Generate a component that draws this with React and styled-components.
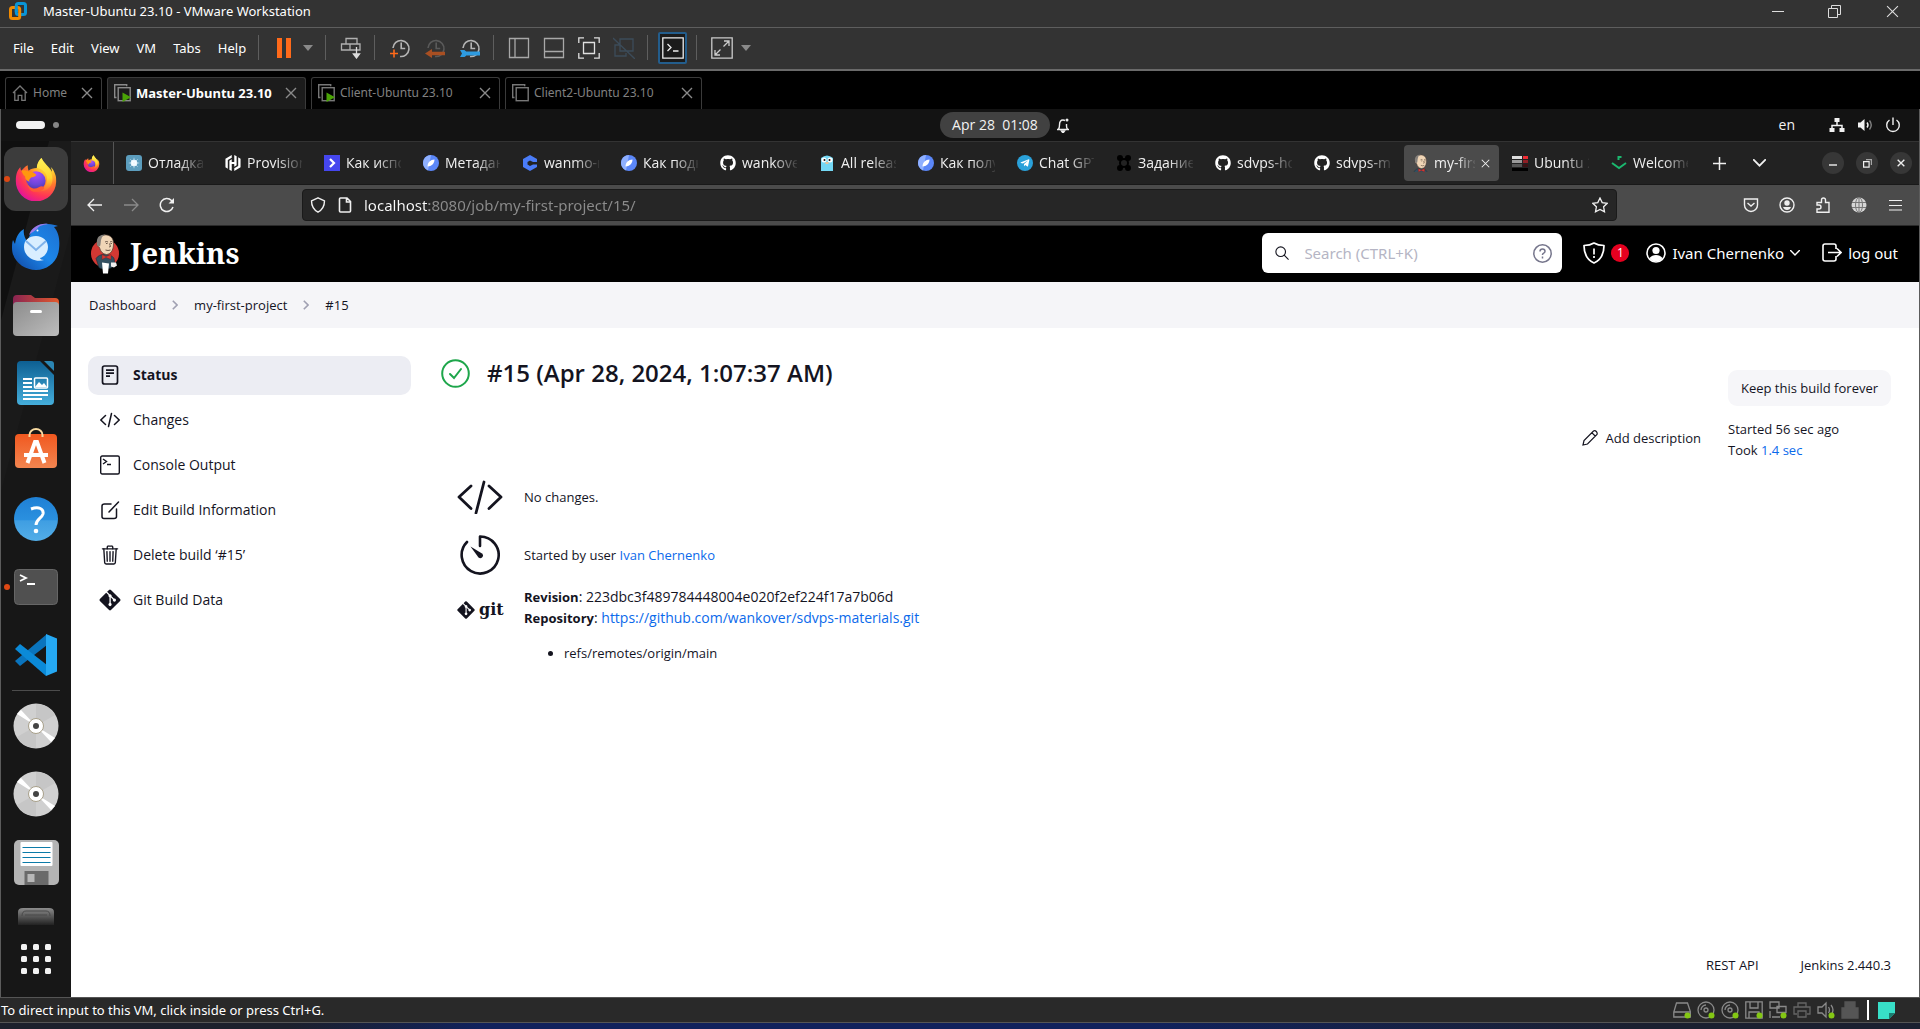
import React from "react";
import styled, { createGlobalStyle, css } from "styled-components";
import { FaGithub, FaTelegramPlane, FaGitAlt } from "react-icons/fa";
import { SiHashicorp } from "react-icons/si";
import { IoTrashOutline } from "react-icons/io5";

const sans = `"Open Sans", "Noto Sans", sans-serif`;
const chrome = `"Noto Sans", "Open Sans", sans-serif`;

const GlobalStyle = createGlobalStyle`
  *, *::before, *::after { box-sizing: border-box; }
  html, body, #root { height: 100%; }
  body { margin: 0; background: #000; font-family: ${sans}; font-size: 14px; }
  button { border: 0; padding: 0; background: none; color: inherit; font: inherit; cursor: pointer; }
  input { font: inherit; }
  svg { display: block; flex: none; }
  a { text-decoration: none; }
`;

/* ---------- icons ---------- */

const Svg = ({ w = 16, h, box = "0 0 16 16", sw = 1, color = "currentColor", children }) => (
  <svg width={w} height={h || w} viewBox={box} fill="none" stroke={color} strokeWidth={sw} aria-hidden="true">
    {children}
  </svg>
);

const Caret = () => <Svg w={10} h={6} box="0 0 10 6"><path d="M0 0h10L5 6z" fill="#8a8a8a" stroke="none" /></Svg>;
const CloseX = ({ size = 12, color, sw = 1.4 }) => (
  <Svg w={size} box="0 0 12 12" sw={sw} color={color}><path d="M1 1l10 10M11 1L1 11" /></Svg>
);
const Chevron = ({ w = 10, h = 6, sw = 1.4 }) => (
  <Svg w={w} h={h} box="0 0 10 6" sw={sw}><path d="M.6.6L5 5l4.4-4.4" strokeLinecap="round" /></Svg>
);

const VmwareLogo = () => (
  <Svg w={18} box="0 0 18 18" sw={3}>
    <rect x="7.3" y="1.5" width="9.2" height="11" rx="2" stroke="#0a95d6" />
    <rect x="1.5" y="5.6" width="9.2" height="10.900" rx="2" stroke="#f38b00" />
    <path d="M7.3 10V4" stroke="#0a95d6" />
  </Svg>
);

const VmIcon = ({ running, bright }) => (
  <Svg w={17} h={18} box="0 0 17 18" sw={1.4} color={bright ? "#8a8a8a" : "#777"}>
    <path d="M2.5 13.5H.7V.7h12v1.6" />
    <rect x="4.2" y="3.7" width="12" height="13" />
    {running && <path d="M8.5 8.5l8.5 4.7-8.5 4.8z" fill="#4aa306" stroke="none" />}
  </Svg>
);

const HomeIcon = () => (
  <Svg w={16} h={16} sw={1.3} color="#777"><path d="M1 8l7-7 7 7M2.8 7v8.3h3.4v-5h3.6v5h3.4V7" /></Svg>
);

const ClockMark = ({ dim, children }) => (
  <Svg w={22} box="0 0 22 22" sw={1.6} color={dim ? "#5a5a5a" : "#b5b5b5"}>
    <path d="M4 11a8 8 0 1 1 7 8.500M12.2 5.500v6h4" />
    {children}
  </Svg>
);

const ScreenTool = ({ kind }) => (
  <Svg w={22} box="0 0 22 22" sw={1.3} color="#a8a8a8">
    {kind === "side" && <path d="M1.5 1.5h19v19h-19zM7 1.5v19" />}
    {kind === "bottom" && <path d="M1.5 1.5h19v19h-19zM1.5 14.5h19" />}
    {kind === "full" && <path stroke="#e0e0e0" d="M6 .8H.8V6M16 .8h5.2V6M6 21.2H.8V16M16 21.2h5.2V16M5.5 5.5h11v11h-11z" />}
    {kind === "unity" && <path stroke="#3c4c5a" d="M7 8H2v11h11v-3M7 2h13v12H7zM0 1l22 21" />}
    {kind === "term" && <path stroke="#eee" d="M.8.8h20.4v20.4H.8zM5.500 7l3.500 3.500-3.500 3.500M11 14h5.500" />}
    {kind === "expand" && <path stroke="#ccc" d="M.8.8h20.4v20.4H.8zM4 18l5.500-5.500M12.500 9.500L18 4M13 4h5v5M4 13v5h5" />}
  </Svg>
);

const Firefox = ({ size }) => (
  <Svg w={size} box="0 0 48 48" color="none">
    <defs>
      <radialGradient id="flame" cx=".8" cy=".1" r="1">
        <stop offset="0" stopColor="#fff44f" /><stop offset=".3" stopColor="#ffc02e" />
        <stop offset=".52" stopColor="#ff7a2c" /><stop offset=".78" stopColor="#ff3655" /><stop offset="1" stopColor="#e2149a" />
      </radialGradient>
      <radialGradient id="globe" cx=".5" cy=".1" r="1">
        <stop offset="0" stopColor="#b04dff" /><stop offset=".6" stopColor="#6a45d8" /><stop offset="1" stopColor="#42318f" />
      </radialGradient>
      <linearGradient id="tail" x1="0" y1="0" x2="0" y2="1">
        <stop offset="0" stopColor="#fff35a" /><stop offset=".6" stopColor="#ffd52f" /><stop offset="1" stopColor="#ff9a22" stopOpacity=".2" />
      </linearGradient>
    </defs>
    <path fill="url(#flame)" d="M45 19c-1-3-3-7-5-8 1 2 1.500 4 1.500 5C38 10 33 7 30 1c-4 4-5 8-5 11-4 0-7 1-9 3-1-2-1-4-1-6-3 1-5 4-7 6-1-1-1-3-1-4-4 4-5 9-5 15a22 22 0 0 0 44 1c0-3 0-6-1-8z" />
    <circle cx="24" cy="26" r="10.500" fill="url(#globe)" />
    <path fill="#ff980e" d="M8 15c3-1 6 0 8 1 3-1 6 1 8 3 1 1-2 3-5 3-2 2-3 3-2 5-3-1-5-3-5-6-2-1-3-4-4-6z" />
    <path fill="url(#tail)" d="M30 1c-4 4-5 8-5 11 6 1 11 5 11 12s-4 11-10 13c9 2 16-4 16-13 0-10-9-15-12-23z" />
    <path fill="#ff5a36" d="M14 27c2 7 8 9 13 6 3-2 6-1 6 1-3 4-9 5-14 3-3-2-5-6-5-10z" />
  </Svg>
);

const Thunderbird = () => (
  <Svg w={50} h={48} box="0 0 50 48" color="none">
    <defs><linearGradient id="bird" x1="1" y1="0" x2="0" y2="1"><stop stopColor="#1d6fd0" /><stop offset=".5" stopColor="#1c87ea" /><stop offset="1" stopColor="#1044a0" /></linearGradient></defs>
    <path fill="url(#bird)" d="M19 12C22 4 29 0 37 1c4 0 7 1 10 2l-4 1c5 6 6 13 5 22-1 12-11 21-23 21S1 38 1 25c0-3 0-5 1-8l2 4C5 13 9 8 13 6c-1 5 1 9 3 12z" />
    <path fill="#9a7bea" d="M18 12C21 4 28 0 37 1c-6 1-9 2-11 5-2 2-5 3-8 6z" />
    <circle cx="26.500" cy="7.500" r="1" fill="#fff" />
    <path fill="#d9eeff" d="M13 24c0-7 5-11 12-11s12 5 12 11-4 10-8 11c0 1 2 2 4 2-9 3-20-3-20-13z" />
    <path d="M15 18l10 9 10-9" stroke="#7fb2ea" strokeWidth="2" />
  </Svg>
);

const Files = () => (
  <Svg w={46} h={42} box="0 0 46 42" color="none">
    <defs>
      <linearGradient id="fback"><stop stopColor="#8a2452" /><stop offset="1" stopColor="#e2592c" /></linearGradient>
      <linearGradient id="ffront" x1="0" y1="0" x2="1" y2="1"><stop stopColor="#8c8c8c" /><stop offset="1" stopColor="#bdbdbd" /></linearGradient>
    </defs>
    <path fill="url(#fback)" d="M0 5q0-4 4-4h14l4 3h20q4 0 4 4v12H0z" />
    <rect y="8" width="46" height="34" rx="4" fill="url(#ffront)" />
    <rect x="17" y="16" width="12" height="3" rx="1.500" fill="#fff" />
  </Svg>
);

const Writer = () => (
  <Svg w={38} h={46} box="0 0 38 46" color="none">
    <defs><linearGradient id="wr" x1="0" y1="0" x2="0" y2="1"><stop stopColor="#0d5f92" /><stop offset="1" stopColor="#45aedb" /></linearGradient></defs>
    <path fill="url(#wr)" d="M4 1h19l14 14v26q0 4-4 4H4q-4 0-4-4V5q0-4 4-4z" />
    <path fill="#2b86b4" d="M27 1h7q3 0 3 3v7z" />
    <path stroke="#fff" strokeWidth="2" d="M6 19h9M6 23h9M6 27h9M6 31h25M6 35h25M6 39h19" />
    <rect x="17.500" y="18" width="13" height="10" rx="1" stroke="#fff" strokeWidth="1.500" />
    <path fill="#fff" d="M18 27l4-5 3 3 2-2 3 4z" />
  </Svg>
);

const Software = () => (
  <Svg w={42} h={46} box="0 0 42 46" color="none">
    <defs><linearGradient id="sw" x1="0" y1="0" x2="0" y2="1"><stop stopColor="#f1581f" /><stop offset="1" stopColor="#f28550" /></linearGradient></defs>
    <rect y="6" width="42" height="34" rx="4" fill="url(#sw)" />
    <path d="M14.500 9V7a6.500 6 0 0 1 13 0v2" stroke="#f7d9a0" strokeWidth="2" />
    <path d="M12.500 35l7.500-21h2L29.500 35M9 27h24" stroke="#fff" strokeWidth="4" />
  </Svg>
);

const Help = () => (
  <Svg w={44} box="0 0 44 44" color="none">
    <defs><linearGradient id="hp" x1="0" y1="0" x2="0" y2="1"><stop stopColor="#1f80d5" /><stop offset=".52" stopColor="#2a90df" /><stop offset=".54" stopColor="#3f9ee2" /><stop offset="1" stopColor="#53aee8" /></linearGradient></defs>
    <circle cx="22" cy="22" r="22" fill="url(#hp)" />
    <path d="M17 12c8-3 13 0 12 5-1 4-7 5-7 11" stroke="#fff" strokeWidth="3" />
    <circle cx="22" cy="34" r="2.300" fill="#fff" />
  </Svg>
);

const TerminalIcon = () => (
  <Svg w={44} h={36} box="0 0 44 36" color="none">
    <rect x=".5" y=".5" width="43" height="35" rx="4" fill="#505050" stroke="#666" />
    <path d="M6 6l6 3-6 3M13 15h8" stroke="#fff" strokeWidth="1.800" />
  </Svg>
);

const VsCode = () => (
  <Svg w={42} h={42} box="0 0 42 42" color="none">
    <path fill="#0a74bd" d="M0 27l5 5L32 11V0z" />
    <path fill="#0b8ad8" d="M5 10L0 15l31 27 1-11z" />
    <path fill="#25a8f2" d="M31 0l11 4.500v33L31 42z" />
  </Svg>
);

const Disc = () => (
  <Svg w={46} box="0 0 46 46" color="none">
    <circle cx="23" cy="23" r="22.500" fill="#d0d0d0" />
    <path fill="#c6c6c6" d="M23 1v22L42 12A22 22 0 0 0 23 1zM23 45V23L4 34a22 22 0 0 0 19 11z" />
    <path fill="#fff" d="M4 11l4-4 15 16zM42 35l-4 4-15-16z" />
    <circle cx="23" cy="23" r="7.500" fill="#fff" stroke="#a8a08a" />
    <circle cx="23" cy="23" r="3" fill="#444" />
  </Svg>
);

const Floppy = () => (
  <Svg w={45} box="0 0 45 45" color="none">
    <rect width="45" height="45" rx="5" fill="#b4b4b4" />
    <rect x="6.500" y="2" width="32" height="24" rx="1" fill="#fff" />
    <path stroke="#0c7ba8" d="M8.500 7.500h28M8.500 12.500h28M8.500 17.500h28M8.500 22.500h28" />
    <path fill="#6a6a6a" d="M10.500 31h24v14h-24z" /><path fill="#b8b8b8" d="M13.500 34h7v8h-7z" />
  </Svg>
);

const Drive = () => (
  <Svg w={38} h={18} box="0 0 38 18" color="none">
    <defs><linearGradient id="dr" x1="0" y1="0" x2="0" y2="1"><stop stopColor="#8c8c8c" /><stop offset="1" stopColor="#222" /></linearGradient></defs>
    <path fill="url(#dr)" d="M1 18V5q0-4 5-4h26q5 0 5 4v13z" />
    <path d="M5 9q0-5 4-5h20q4 0 4 5M8 8h22" stroke="#4a4a4a" />
  </Svg>
);

const GridDots = () => (
  <Svg w={30} box="0 0 30 30" color="none">
    {[0, 12, 24].map((y) => [0, 12, 24].map((x) => <rect key={`${x}-${y}`} x={x} y={y} width="6" height="6" rx="1.500" fill="#f2f2f2" />))}
  </Svg>
);

const Butler = ({ w, h, bust }) => (
  <Svg w={w} h={h} box={bust ? "4 0 20 26" : "0 0 28 40"} color="none">
    <ellipse cx="14" cy="20" rx="14" ry="14" fill={bust ? "none" : "#d33833"} />
    <path d="M5 25c2-3 5-4 8-4s9 1 10 4l1 5-3 4c-5 2-10 2-13 0z" fill="#335061" stroke="#1c2c36" strokeWidth=".6" />
    <path d="M6.500 9C7 3 12 1 16 1.500c5 1 7 5 6.500 10-.5 6-3 9-7 9.500-4-.5-6-3-7-7-2-1-3-3-2-5z" fill="#f0d6b7" stroke="#4b3a30" strokeWidth=".7" />
    <path d="M6 10C5 3 10 .5 15 1c-3 1-4 2-4.500 4C9.500 7 10 10 9 13l-1.500-.5C6 12 6 11 6 10z" fill="#85807b" />
    <path d="M14 8.500q1.500-1 3 0M19 8.500q1.500-1 2.500 0M15 10h1.500M19.500 10h1.500M18.500 10l1 3-1.500.5M14.500 16.500q2.500 1 5 0" stroke="#4b3a30" strokeWidth=".8" />
    <path d="M11 21l4 2 5-2v5l-5-2-4 2z" fill="#d33833" stroke="#6a1a18" strokeWidth=".4" />
    <path d="M11 29l7 1-1 10h-5z" fill="#fff" /><path d="M20 29h5l1 3-3 2-3-1z" fill="#eee" />
  </Svg>
);

/* ---------- host window ---------- */

const Screen = styled.div`height: 100vh; min-height: 1000px; display: flex; flex-direction: column; overflow: hidden;`;

const TitleBar = styled.header`
  display: flex; align-items: center; height: 27px; padding: 0 9px 5px; gap: 16px;
  background: #333; color: #fff; font: 13px/18px ${chrome};
`;
const WindowControls = styled.div`
  display: flex; margin-left: auto;
  button { width: 57px; height: 20px; display: grid; place-items: center; color: #ddd; }
  button:last-child { width: 38px; margin-left: 10px; }
`;

const ToolBar = styled.div`
  display: flex; align-items: center; height: 44px; padding: 0 0 2px 13px;
  background: #333; border-top: 1px solid #5e5e5e; border-bottom: 2px solid #6a6a6a;
`;
const MenuBar = styled.nav`
  display: flex; gap: 17px; padding-right: 6px; color: #fff; font: 13px/20px ${chrome};
`;
const Divider = styled.span`width: 1px; height: 25px; margin: 0 7px 0 6px; background: #5e5e5e; flex: none;`;
const ToolButton = styled.button`
  width: 35px; height: 32px; display: grid; place-items: center;
  ${(p) => p.$on && css`&& { width: 29px; margin: 0 3px; background: #1b1b1b; border: 2px solid #235d8c; border-radius: 2px; }`}
`;
const CaretButton = styled.button`width: 14px; height: 32px; display: grid; place-items: center; margin-right: 4px;`;

const VmTabs = styled.nav`display: flex; align-items: flex-end; gap: 5px; height: 38px; padding-left: 5px; background: #000;`;
const VmTab = styled.div`
  display: flex; align-items: center; gap: 5px; width: ${(p) => p.$width}px; height: 32px; padding: 0 8px 2px 6px;
  border: 1px solid #3a3a3a; border-bottom: 0; border-radius: 3px 3px 0 0;
  color: ${(p) => (p.$active ? "#fff" : "#808080")}; background: ${(p) => (p.$active ? "#1c1c1c" : "#000")};
  font: ${(p) => (p.$active ? "bold 13px" : "12px")}/18px ${chrome}; white-space: nowrap;
  button:last-child { margin-left: auto; color: #8a8a8a; }
`;

const Guest = styled.div`
  flex: 1; min-height: 0; display: flex; flex-direction: column;
  border: solid #5c5c5c; border-width: 0 1px;
`;

const StatusBar = styled.footer`
  display: flex; align-items: center; height: 26px; padding: 0 22px 0 1px;
  background: #292929; border: solid #555; border-width: 1px 0; color: #fff; font: 13px/18px ${chrome};
`;
const Devices = styled.div`
  display: flex; align-items: center; margin-left: auto;
  button { width: 24px; display: grid; place-items: center; }
`;
const DeviceRule = styled.span`width: 2px; height: 20px; margin: 0 5px; background: #fff;`;
const TaskEdge = styled.div`height: 6px; flex: none; background: linear-gradient(90deg, #1c202c 0 15%, #10215c 25% 60%, #1b2030 85%);`;

/* ---------- guest desktop ---------- */

const TopBar = styled.div`
  display: flex; align-items: center; height: 32px; background: #131313; color: #f2f2f2; font: 14px/20px ${sans};
`;
const Side = styled.div`
  flex: 1 1 0; display: flex; align-items: center; gap: 8px;
  ${(p) => (p.$end ? css`justify-content: flex-end; gap: 12px; padding-right: 18px;` : css`padding-left: 15px;`)}
`;
const Workspace = styled.button`
  && { width: ${(p) => (p.$on ? 29 : 6)}px; height: ${(p) => (p.$on ? 8 : 6)}px; border-radius: 4px; background: ${(p) => (p.$on ? "#f2f2f2" : "#868686")}; }
`;
const ClockArea = styled.div`display: flex; align-items: center; gap: 5px; padding-left: 94px;`;
const Clock = styled.button`&& { width: 110px; height: 26px; border-radius: 13px; background: #414141; white-space: pre; }`;
const Lang = styled.button`margin-right: 22px;`;

const Desktop = styled.div`flex: 1; min-height: 0; display: flex;`;

const Dock = styled.nav`
  width: 70px; flex: none; display: flex; flex-direction: column; align-items: center; padding-top: 4px;
  background: linear-gradient(105deg, #101010 0 46px, #1a1a1a 47px 90px, #171717 91px);
`;
const DockItem = styled.button`
  position: relative; width: 70px; height: 68px; flex: none; display: grid; place-items: center;
  ${(p) => p.$running && css`&::before { content: ""; position: absolute; left: 3px; top: 31px; width: 6px; height: 6px; border-radius: 3px; background: #dd4814; }`}
`;
const DockTile = styled.span`width: 64px; height: 64px; display: grid; place-items: center; border-radius: 12px; background: #3c3c3c;`;
const DockCut = styled.button`width: 70px; height: 29px; display: grid; place-items: end center;`;
const DockRule = styled.hr`width: 48px; height: 1px; margin: 1px 0; border: 0; background: #4c4c4c;`;

/* ---------- browser ---------- */

const Browser = styled.main`flex: 1; min-width: 0; display: flex; flex-direction: column; background: #fff;`;

const TabStrip = styled.div`
  display: flex; align-items: center; height: 44px; background: #222; border-top: 1px solid #333; border-bottom: 1px solid #191919;
  color: #f0f0f0; font: 14px/20px ${sans};
`;
const PinnedTab = styled.button`&& { width: 43px; height: 42px; padding-right: 2px; display: grid; place-items: center; border-right: 1px solid #555; margin-right: 3px; }`;
const Tab = styled.button`
  && { display: flex; align-items: center; gap: 6px; width: 95px; height: 36px; margin-right: 4px; padding: 0 9px; flex: none; border-radius: 4px;
  background: ${(p) => (p.$active ? "#4b4b4b" : "transparent")}; }
`;
const TabTitle = styled.span`
  flex: 1; min-width: 0; white-space: nowrap; text-align: left;
  mask-image: linear-gradient(90deg, #000 55%, transparent 105%);
`;
const Fav = styled.span`width: 16px; height: 16px; flex: none; display: grid; place-items: center; border-radius: ${(p) => p.$r || 0}px; background: ${(p) => p.$bg || "none"};`;
const StripButton = styled.button`width: 36px; height: 36px; margin-right: 4px; display: grid; place-items: center;`;
const WinButtons = styled.div`
  display: flex; gap: 12px; margin-left: auto; padding-right: 7px;
  button { width: 22px; height: 22px; display: grid; place-items: center; border-radius: 11px; background: #373737; }
`;

const NavBar = styled.div`
  display: flex; align-items: center; height: 41px; padding: 0 6px; background: #4b4b4b; border-bottom: 1px solid #2a2a2a; color: #f0f0f0;
`;
const NavButton = styled.button`
  && { width: 36px; height: 36px; display: grid; place-items: center; color: ${(p) => (p.$off ? "#8a8a8a" : "#f0f0f0")}; }
`;
const UrlBox = styled.label`
  flex: 1; display: flex; align-items: center; gap: 9px; height: 32px; margin: 0 116px 0 117px; padding: 0 8px 0 7px;
  background: #262626; border: 1px solid #1a1a1a; border-radius: 4px;
`;
const UrlInput = styled.input`
  flex: 1; min-width: 0; border: 0; outline: 0; padding: 0; height: 24px; font: 15px/24px ${chrome};
  color: transparent; background: linear-gradient(90deg, #fbfbfb 0 65px, #8c8c8c 65px); background-clip: text;
`;

/* ---------- Jenkins ---------- */

const Header = styled.header`
  display: flex; align-items: center; height: 56px; padding: 0 21px 2px 20px; background: #000; color: #fff; font: 15px/20px ${chrome};
`;
const Brand = styled.a`display: flex; align-items: center; gap: 11px; margin-right: auto; color: #fff; font: bold 29px/36px "Noto Serif", "DejaVu Serif", serif;`;
const SearchBox = styled.label`
  display: flex; align-items: center; width: 300px; height: 40px; padding: 0 10px 0 13px; gap: 12px; border-radius: 6px; background: #fff; color: #14141f;
`;
const SearchInput = styled.input`
  flex: 1; min-width: 0; border: 0; outline: 0; padding: 0 0 0 3px; font: 15px/24px ${chrome}; background: none;
  &::placeholder { color: #b5b5c4; opacity: 1; }
`;
const HeaderLink = styled.a`display: flex; align-items: center; gap: 6px; color: #fff; margin-left: ${(p) => p.$gap}px;`;
const Badge = styled.span`width: 18px; height: 18px; border-radius: 9px; background: #e6001f; font: 12px/18px ${sans}; text-align: center;`;

const Crumbs = styled.nav`
  display: flex; align-items: center; gap: 16px; height: 46px; padding-left: 18px; background: #f5f5f8; font-size: 13px; font-weight: 500;
  a { color: #14141f; }
`;

const Page = styled.div`flex: 1; display: flex; padding: 28px 28px 0 17px; color: #14141f;`;
const SideNav = styled.nav`width: 323px; flex: none; display: flex; flex-direction: column; gap: 6px;`;
const Task = styled.a`
  display: flex; align-items: center; gap: 11px; height: 39px; padding: 0 0 2px 10px; border-radius: 10px; color: #14141f;
  font-size: 14px; font-weight: ${(p) => (p.$active ? 700 : 500)}; background: ${(p) => (p.$active ? "#ecedf3" : "none")};
`;
const TaskIcon = styled.span`width: 24px; height: 24px; display: grid; place-items: center;`;

const Content = styled.section`flex: 1; min-width: 0; display: flex; margin-left: 30px;`;
const Build = styled.div`flex: 1; min-width: 0;`;
const Title = styled.h1`display: flex; align-items: center; gap: 17px; margin: 2px 0 80px; font-size: 24px; line-height: 30px; font-weight: 600;`;
const Summary = styled.div`
  display: grid; grid-template-columns: 48px 1fr; column-gap: 20px; align-items: center; padding-left: 15px;
  grid-auto-rows: 58px; font-size: 13px; line-height: 21px;
`;
const SummaryIcon = styled.span`display: grid; place-items: center; height: 40px;`;
const GitRow = styled.div`
  display: grid; grid-template-columns: 48px 1fr; column-gap: 20px; align-items: start; padding-left: 15px;
  font-size: 14px; line-height: 21px; margin-top: 2px;
  p { margin: 0; }
  b { font-size: 13px; line-height: 1; }
  ul { margin: 15px 0 0; padding-left: 40px; font-size: 13px; }
`;
const Link = styled.a`color: #0b6aeb;`;
const GitLogo = styled.span`display: flex; align-items: center; gap: 3px; height: 50px; padding-bottom: 2px; font: bold 16px/20px "DejaVu Serif", serif;`;

const Aside = styled.div`display: flex; align-items: flex-start; gap: 27px; padding-top: 14px; font-size: 13px; line-height: 21px;`;
const Describe = styled.a`display: flex; align-items: center; gap: 8px; height: 36px; margin-top: 50px; color: #14141f; font-weight: 500;`;
const Timing = styled.div`width: 163px;`;
const Keep = styled.button`
  && { width: 163px; height: 36px; margin-bottom: 13px; border-radius: 9px; background: #f6f6f9; font-weight: 500; font-size: 13px; color: #14141f; }
`;
const PageFooter = styled.footer`
  display: flex; justify-content: flex-end; gap: 42px; padding: 0 28px 22px 0; font-size: 13px; line-height: 20px; font-weight: 500;
  a { color: #14141f; }
`;

/* ---------- data ---------- */

const leaf = <Fav><Svg w={16} color="none"><circle cx="8" cy="8" r="8" fill="#5b87f8" /><path d="M8 0a8 8 0 0 0-3 15.400z" fill="#8fb0ff" /><path d="M4.500 11.500c0-4 3-7 7-7 0 4-3 7-7 7z" fill="#fff" /></Svg></Fav>;
const github = <FaGithub size={16} color="#fff" />;

const browserTabs = [
  { t: "Отладка", i: <Fav $bg="#5c9dbd" $r={3}><Svg w={12} color="#e8f6ff" sw={1.200}><circle cx="8" cy="8" r="4" fill="#fff" /><path d="M8 1v14M1 8h14M3 3l10 10M13 3L3 13" opacity=".6" /></Svg></Fav> },
  { t: "Provision", i: <SiHashicorp size={16} color="#fff" /> },
  { t: "Как испо", i: <Fav $bg="#4546ee"><Svg w={16} sw={2.200} color="#fff"><path d="M6 4l4 4-4 4" /></Svg></Fav> },
  { t: "Метадан", i: leaf },
  { t: "wanmo-r", i: <Svg w={16} color="none"><path d="M8 0l7 4v3h-4L8 5.500 5.500 7v2.500L8 11l3-1.500h4V12l-7 4-7-4V4z" fill="#4a7cf8" /></Svg> },
  { t: "Как подк", i: leaf },
  { t: "wankove", i: github },
  { t: "All releas", i: <Svg w={16} color="none"><path d="M2 3q6-5 12 0v13H2z" fill="#74d8f5" /><circle cx="5" cy="5" r="2.500" fill="#fff" /><circle cx="11" cy="5" r="2.500" fill="#fff" /><circle cx="5.500" cy="5" r="1" fill="#111" /><circle cx="10.500" cy="5" r="1" fill="#111" /><path d="M6.500 7h3v2h-3z" fill="#e8c49a" /></Svg> },
  { t: "Как полу", i: leaf },
  { t: "Chat GPT", i: <Fav $bg="#2aa1da" $r={8}><FaTelegramPlane size={10} color="#fff" /></Fav> },
  { t: "Задание", i: <Svg w={16} color="none">{[[4, 3], [12, 3], [4, 13], [12, 13]].map(([x, y]) => <circle key={`${x}${y}`} cx={x} cy={y} r="3" fill="#000" />)}<circle cx="8" cy="8" r="4" stroke="#000" strokeWidth="2" /></Svg> },
  { t: "sdvps-ho", i: github },
  { t: "sdvps-ma", i: github },
  { t: "my-firs", i: <Butler w={15} h={18} bust />, active: true },
  { t: "Ubuntu 2", i: <Svg w={16} color="none"><path d="M0 1h10v3H0z" fill="#ddd" /><path d="M11 1h5v3h-5z" fill="#ee2b33" /><path d="M0 5h10v3H0z" fill="#999" /><path d="M11 5h5v3h-5z" fill="#8f1f25" /><path d="M0 9h10v3H0z" fill="#555" /><path d="M11 9h5v3h-5z" fill="#3a1114" /><path d="M0 13h16v3H0z" fill="#000" /></Svg> },
  { t: "Welcome", i: <Svg w={16} color="#1bb76e" sw={2}><path d="M1 8l7 5 7-5" /><path d="M7.500 5V2h3" /></Svg> },
];

const dot = <circle cx="14.500" cy="14.500" r="3" fill="#84c714" stroke="none" />;
const devices = [
  ["Hard Disk", <><path d="M3.500 2h11l3 9v5H.8v-5zM1 11h16" />{dot}</>],
  ["CD/DVD", <><circle cx="9" cy="9" r="8" /><circle cx="9" cy="9" r="2" /><path d="M4 9a5 5 0 0 1 5-5" />{dot}</>],
  ["CD/DVD 2", <><circle cx="9" cy="9" r="8" /><circle cx="9" cy="9" r="2" /><path d="M4 9a5 5 0 0 1 5-5" />{dot}</>],
  ["Floppy", <><path d="M.8.8h16.400v16.400H.8zM5 1v6h8V1M4 17v-6h10v6" />{dot}</>],
  ["Network", <><path d="M1 1h9v6H1zM8 5.500h9v6H8zM1 10v7M3 16h8" />{dot}</>],
  ["Printer", <path d="M5 6V2h8v4M4 13H1V6h16v7h-3M5 10h8v6H5z" stroke="#666" />],
  ["Sound", <><path d="M1 6h4l4-4v14l-4-4H1zM11.500 6q2 3 0 6M14 4q4 5 0 10" />{dot}</>],
  ["USB", <path d="M4 1h10v6h3v10H1V7h3z" fill="#555" stroke="#555" />],
];

const tasks = [
  ["Status", <Svg w={20} box="0 0 20 20" sw={1.700}><rect x="2.500" y="1" width="15" height="18" rx="2" /><path d="M6 5.200h8M6 8.200h8M6 11.200h4" /></Svg>],
  ["Changes", <Svg w={20} box="0 0 20 20" sw={1.500}><path d="M5.500 5.500L.8 10l4.700 4.500M14.500 5.500l4.700 4.500-4.700 4.500M11.500 3.500l-3 13" strokeLinecap="round" /></Svg>],
  ["Console Output", <Svg w={20} box="0 0 20 20" sw={1.400}><rect x=".7" y="1" width="18.600" height="18" rx="1.500" /><path d="M3 4l3.500 2.500L3 9M7 9.500h4" /></Svg>],
  ["Edit Build Information", <Svg w={20} box="0 0 20 20" sw={1.500}><path d="M11 4H4.500Q2 4 2 6v10.500Q2 18.500 4 18.500h10q2.500 0 2.500-2V9M9 12l9.500-10" strokeLinecap="round" /></Svg>],
  ["Delete build ‘#15’", <IoTrashOutline size={22} />],
  ["Git Build Data", <FaGitAlt size={24} />],
];

const dock = [
  ["Thunderbird", <Thunderbird />], ["Files", <Files />], ["Writer", <Writer />],
  ["Software", <Software />], ["Help", <Help />], ["Terminal", <TerminalIcon />, true], ["VS Code", <VsCode />],
];

/* ---------- sections ---------- */

const HostChrome = () => (
  <>
    <TitleBar>
      <VmwareLogo />
      <span>Master-Ubuntu 23.10 - VMware Workstation</span>
      <WindowControls>
        <button aria-label="Minimize"><Svg w={12} box="0 0 12 12"><path d="M0 6.500h12" /></Svg></button>
        <button aria-label="Restore"><Svg w={13} box="0 0 13 13"><path d="M.5 3.500h9v9h-9zM3.500 3V.5h9v9H10" /></Svg></button>
        <button aria-label="Close"><CloseX size={13} sw={1} /></button>
      </WindowControls>
    </TitleBar>
    <ToolBar>
      <MenuBar>{["File", "Edit", "View", "VM", "Tabs", "Help"].map((m) => <button key={m}>{m}</button>)}</MenuBar>
      <Divider />
      <ToolButton aria-label="Suspend"><Svg w={16} h={20} box="0 0 16 20" color="none"><path d="M1 0h5v20H1zM10 0h5v20h-5z" fill="#ff6a1a" /></Svg></ToolButton>
      <CaretButton aria-label="Power options"><Caret /></CaretButton>
      <Divider />
      <ToolButton aria-label="Send keys"><Svg w={22} box="0 0 22 22" sw={1.300} color="#b0b0b0"><path d="M6 7V1.500h11V7M1.500 7h18.500v6H1.500zM10 7v6" /><path d="M16.500 10v10M13.500 17l3 4 3-4z" stroke="#ddd" fill="#ddd" /></Svg></ToolButton>
      <Divider />
      <ToolButton aria-label="Take snapshot"><ClockMark><path d="M1 16.500h8M5 12.500v8" stroke="#ff6a1a" /></ClockMark></ToolButton>
      <ToolButton aria-label="Revert snapshot"><ClockMark dim><path d="M21 16.500H7" stroke="#a84f22" strokeWidth="3.500" /><path d="M8 12v9L1 16.500z" fill="#a84f22" stroke="none" /></ClockMark></ToolButton>
      <ToolButton aria-label="Manage snapshots"><ClockMark><path d="M5 16.500h16" stroke="#2e9be0" strokeWidth="4" /><path d="M1 13h4.500q2 1 2 3.500T5.500 20H1l2-3.500z" fill="#2e9be0" stroke="none" /></ClockMark></ToolButton>
      <Divider />
      {["side", "bottom", "full", "unity"].map((k) => <ToolButton key={k} aria-label={k}><ScreenTool kind={k} /></ToolButton>)}
      <Divider />
      <ToolButton $on aria-label="Console view"><ScreenTool kind="term" /></ToolButton>
      <Divider />
      <ToolButton aria-label="Stretch"><ScreenTool kind="expand" /></ToolButton>
      <CaretButton aria-label="Stretch options"><Caret /></CaretButton>
    </ToolBar>
    <VmTabs>
      <VmTab $width={97}><HomeIcon /><span>Home</span><button aria-label="Close"><CloseX /></button></VmTab>
      <VmTab $width={199} $active><VmIcon running bright /><span>Master-Ubuntu 23.10</span><button aria-label="Close"><CloseX /></button></VmTab>
      <VmTab $width={189}><VmIcon running /><span>Client-Ubuntu 23.10</span><button aria-label="Close"><CloseX /></button></VmTab>
      <VmTab $width={197}><VmIcon /><span>Client2-Ubuntu 23.10</span><button aria-label="Close"><CloseX /></button></VmTab>
    </VmTabs>
  </>
);

const GnomeBar = () => (
  <TopBar>
    <Side><Workspace $on aria-label="Workspace 1" /><Workspace aria-label="Workspace 2" /></Side>
    <ClockArea>
      <Clock>Apr 28  01:08</Clock>
      <Svg w={16} sw={1.400} color="#eee"><path d="M2 12.500h12M3.500 12q1-1 1-4 0-5 3.500-5 1 0 2 .5M11.500 7v2q0 2 1 3" /><circle cx="12" cy="3" r="1.500" fill="#eee" stroke="none" /><path d="M6.500 14h3l-1.500 2z" fill="#eee" /></Svg>
    </ClockArea>
    <Side $end>
      <Lang>en</Lang>
      <Svg w={16} sw={1.500} color="#f2f2f2"><path d="M8 5v4M3 11V8.500h10V11" /><path d="M5.500 1h5v4h-5zM.500 11h5v4h-5zM10.500 11h5v4h-5z" fill="#f2f2f2" stroke="none" /></Svg>
      <Svg w={16} sw={1.400} color="#f2f2f2"><path d="M1 5.500h2.500L7.500 2v12l-4-3.500H1z" fill="#f2f2f2" stroke="none" /><path d="M10 5.500q2 2.500 0 5" /><path d="M12.500 3.500q3.500 4.500 0 9" opacity=".5" /></Svg>
      <Svg w={16} sw={1.400} color="#f2f2f2"><path d="M4.500 3a6.300 6.300 0 1 0 7 0M8 .5V8" /></Svg>
    </Side>
  </TopBar>
);

const BrowserChrome = () => (
  <>
    <TabStrip>
      <PinnedTab aria-label="Firefox View"><Firefox size={17} /></PinnedTab>
      {browserTabs.map((b) => (
        <Tab key={b.t} $active={b.active}>{b.i}<TabTitle>{b.t}</TabTitle>{b.active && <CloseX size={9} />}</Tab>
      ))}
      <StripButton aria-label="New tab"><Svg w={13} box="0 0 13 13" sw={1.500}><path d="M6.500 0v13M0 6.500h13" /></Svg></StripButton>
      <StripButton aria-label="List tabs"><Chevron w={13} h={8} /></StripButton>
      <WinButtons>
        <button aria-label="Minimize"><Svg w={8} box="0 0 8 8" sw={1.400}><path d="M0 6h8" /></Svg></button>
        <button aria-label="Restore"><Svg w={9} box="0 0 9 9" sw={1.200}><path d="M.6 2.600h5.500v5.500H.6z" /><path d="M3 .6h5.400V6" opacity=".6" /></Svg></button>
        <button aria-label="Close"><CloseX size={8} sw={2} /></button>
      </WinButtons>
    </TabStrip>
    <NavBar>
      <NavButton aria-label="Back"><Svg w={16} sw={1.300}><path d="M15 8H1M7 2L1 8l6 6" /></Svg></NavButton>
      <NavButton $off aria-label="Forward"><Svg w={16} sw={1.300}><path d="M1 8h14M9 2l6 6-6 6" /></Svg></NavButton>
      <NavButton aria-label="Reload"><Svg w={16} sw={1.500}><path d="M14 10A6.500 6.500 0 1 1 12.500 3.500L14.500 5.500" /><path d="M15 1v5.500h-5.500z" fill="currentColor" stroke="none" /></Svg></NavButton>
      <UrlBox>
        <Svg w={16} sw={1.400}><path d="M8 .8l6.500 3C14.500 9 12 13 8 15.200 4 13 1.500 9 1.500 3.800z" strokeLinejoin="round" /></Svg>
        <Svg w={20} h={16} box="0 0 20 16" sw={1.600}><path d="M12 1H5.500q-1 0-1 1v12q0 1 1 1h9q1 0 1-1V4.500zM11.500 1v4h4" /></Svg>
        <UrlInput aria-label="Address" defaultValue="localhost:8080/job/my-first-project/15/" />
        <Svg w={16} sw={1.300}><path d="M8 1l2.200 4.600 5 .7-3.600 3.500.9 5L8 12.400 3.500 14.800l.9-5L.8 6.300l5-.7z" /></Svg>
      </UrlBox>
      <NavButton aria-label="Pocket"><Svg w={16} sw={1.400}><path d="M1.500 2h13v6a6.500 6.500 0 0 1-13 0zM4.500 6l3.500 3 3.500-3" /></Svg></NavButton>
      <NavButton aria-label="Account"><Svg w={16} sw={1.400}><circle cx="8" cy="8" r="7" /><circle cx="8" cy="6" r="2" fill="currentColor" /><path d="M4 10h8q-1 3-4 3t-4-3z" fill="currentColor" stroke="none" /></Svg></NavButton>
      <NavButton aria-label="Extensions"><Svg w={16} sw={1.400}><path d="M2 15.200h12V5.500h-3.500V3a2 2 0 0 0-4 0v2.500H2V8h2a1.800 1.800 0 0 1 0 4H2z" /></Svg></NavButton>
      <NavButton aria-label="Translate"><Svg w={16} sw={1} color="#777"><circle cx="8" cy="8" r="7.500" fill="#d6d6d6" stroke="none" /><path d="M1 5.500h14M1 10.500h14M8 1v14" /><ellipse cx="8" cy="8" rx="3.500" ry="7.500" /></Svg></NavButton>
      <NavButton aria-label="Menu"><Svg w={13} h={12} box="0 0 13 12" sw={1.200}><path d="M0 1.500h13M0 6.500h13M0 11h13" /></Svg></NavButton>
    </NavBar>
  </>
);

const Separator = () => <Svg w={6} h={10} box="0 0 6 10" sw={1.600} color="#a0a0b2"><path d="M.8.8L5 5 .8 9.200" /></Svg>;

const JenkinsPage = () => (
  <>
    <Header>
      <Brand href="#"><Butler w={28} h={41} />Jenkins</Brand>
      <SearchBox>
        <Svg w={14} sw={1.300}><circle cx="6.500" cy="6.500" r="5.500" /><path d="M10.500 10.500l5 5" /></Svg>
        <SearchInput aria-label="Search" placeholder="Search (CTRL+K)" />
        <Svg w={19} box="0 0 19 19" sw={1.500} color="#76768c"><circle cx="9.500" cy="9.500" r="8.700" /><path d="M7 7.500q0-2.500 2.500-2.500T12 7.300q0 1.200-1.300 1.900T9.500 11M9.500 12.500v2" /></Svg>
      </SearchBox>
      <HeaderLink href="#" $gap={21} aria-label="Security warnings">
        <Svg w={22} box="0 0 22 22" sw={1.700}><path d="M11 1q4 2.500 10 2.500 0 13-10 17.500Q1 16.500 1 3.500q6 0 10-2.500zM11 6.500v6M11 14v2" strokeLinejoin="round" /></Svg>
        <Badge>1</Badge>
      </HeaderLink>
      <HeaderLink href="#" $gap={17}>
        <Svg w={20} box="0 0 20 20" sw={1.600}><circle cx="10" cy="10" r="9" /><circle cx="10" cy="7.500" r="3.600" fill="#fff" stroke="none" /><path d="M3.500 15q2.500-3 6.500-3t6.500 3Q14 18.500 10 18.500T3.500 15z" fill="#fff" stroke="none" /></Svg>
        Ivan Chernenko
        <Chevron w={10} h={6} />
      </HeaderLink>
      <HeaderLink href="#" $gap={22}>
        <Svg w={20} box="0 0 20 20" sw={1.600}><path d="M14 6V3q0-2-2-2H3Q1 1 1 3v13q0 2 2 2h9q2 0 2-2v-3M6 9.500h13M15 5.500l4 4-4 4" /></Svg>
        log out
      </HeaderLink>
    </Header>
    <Crumbs>
      <a href="#">Dashboard</a><Separator /><a href="#">my-first-project</a><Separator /><a href="#">#15</a>
    </Crumbs>
    <Page>
      <SideNav>
        {tasks.map(([label, icon], i) => <Task key={label} href="#" $active={i === 0}><TaskIcon>{icon}</TaskIcon>{label}</Task>)}
      </SideNav>
      <Content>
        <Build>
          <Title>
            <Svg w={29} box="0 0 29 29" sw={2} color="#1ea64b"><circle cx="14.500" cy="14.500" r="13.300" /><path d="M9 15l4 4 7-9" strokeLinecap="round" /></Svg>
            #15 (Apr 28, 2024, 1:07:37 AM)
          </Title>
          <Summary>
            <SummaryIcon><Svg w={46} h={34} box="0 0 46 34" sw={2.800}><path d="M14 6L2 17l12 11.500M32 6l12 11-12 11.500M27 2l-8 31" strokeLinecap="round" strokeLinejoin="round" /></Svg></SummaryIcon>
            <span>No changes.</span>
            <SummaryIcon><Svg w={40} box="0 0 40 40" sw={2.600}><path d="M20 11V1.500A18.500 18.500 0 1 1 7 7" strokeLinecap="round" strokeLinejoin="round" /><path d="M10.500 11.500l11.500 7a2.600 2.600 0 0 1-3.500 4z" fill="currentColor" stroke="none" /></Svg></SummaryIcon>
            <span>Started by user <Link href="#">Ivan Chernenko</Link></span>
          </Summary>
          <GitRow>
            <GitLogo><FaGitAlt size={20} />git</GitLogo>
            <div>
              <p><b>Revision</b>: 223dbc3f489784448004e020f2ef224f17a7b06d</p>
              <p><b>Repository</b>: <Link href="#">https://github.com/wankover/sdvps-materials.git</Link></p>
              <ul><li>refs/remotes/origin/main</li></ul>
            </div>
          </GitRow>
        </Build>
        <Aside>
          <Describe href="#">
            <Svg w={16} sw={1.200}><path d="M1 15l1-4.500L11.500 1q1.500-.8 2.800.5T15 4.500L5.500 14zM10 2.800L13.200 6" /></Svg>
            Add description
          </Describe>
          <Timing>
            <Keep>Keep this build forever</Keep>
            <div>Started 56 sec ago</div>
            <div>Took <Link href="#">1.4 sec</Link></div>
          </Timing>
        </Aside>
      </Content>
    </Page>
    <PageFooter><a href="#">REST API</a><a href="#">Jenkins 2.440.3</a></PageFooter>
  </>
);

export default function App() {
  return (
    <Screen>
      <GlobalStyle />
      <HostChrome />
      <Guest>
        <GnomeBar />
        <Desktop>
          <Dock>
            <DockItem $running aria-label="Firefox"><DockTile><Firefox size={44} /></DockTile></DockItem>
            {dock.map(([name, icon, running]) => <DockItem key={name} $running={running} aria-label={name}>{icon}</DockItem>)}
            <DockRule />
            <DockItem aria-label="Disc 1"><Disc /></DockItem>
            <DockItem aria-label="Disc 2"><Disc /></DockItem>
            <DockItem aria-label="Floppy"><Floppy /></DockItem>
            <DockCut aria-label="Drive"><Drive /></DockCut>
            <DockItem aria-label="Show apps"><GridDots /></DockItem>
          </Dock>
          <Browser>
            <BrowserChrome />
            <JenkinsPage />
          </Browser>
        </Desktop>
      </Guest>
      <StatusBar>
        <span>To direct input to this VM, click inside or press Ctrl+G.</span>
        <Devices>
          {devices.map(([name, art]) => <button key={name} aria-label={name}><Svg w={18} box="0 0 18 18" sw={1.300} color="#8a8a8a">{art}</Svg></button>)}
          <DeviceRule />
          <button aria-label="Messages"><Svg w={17} box="0 0 17 17" color="none"><path d="M0 0h17v11l-6 6H0z" fill="#38dfc8" /><path d="M17 11h-6v6z" fill="#1a7d70" /></Svg></button>
        </Devices>
      </StatusBar>
      <TaskEdge />
    </Screen>
  );
}
